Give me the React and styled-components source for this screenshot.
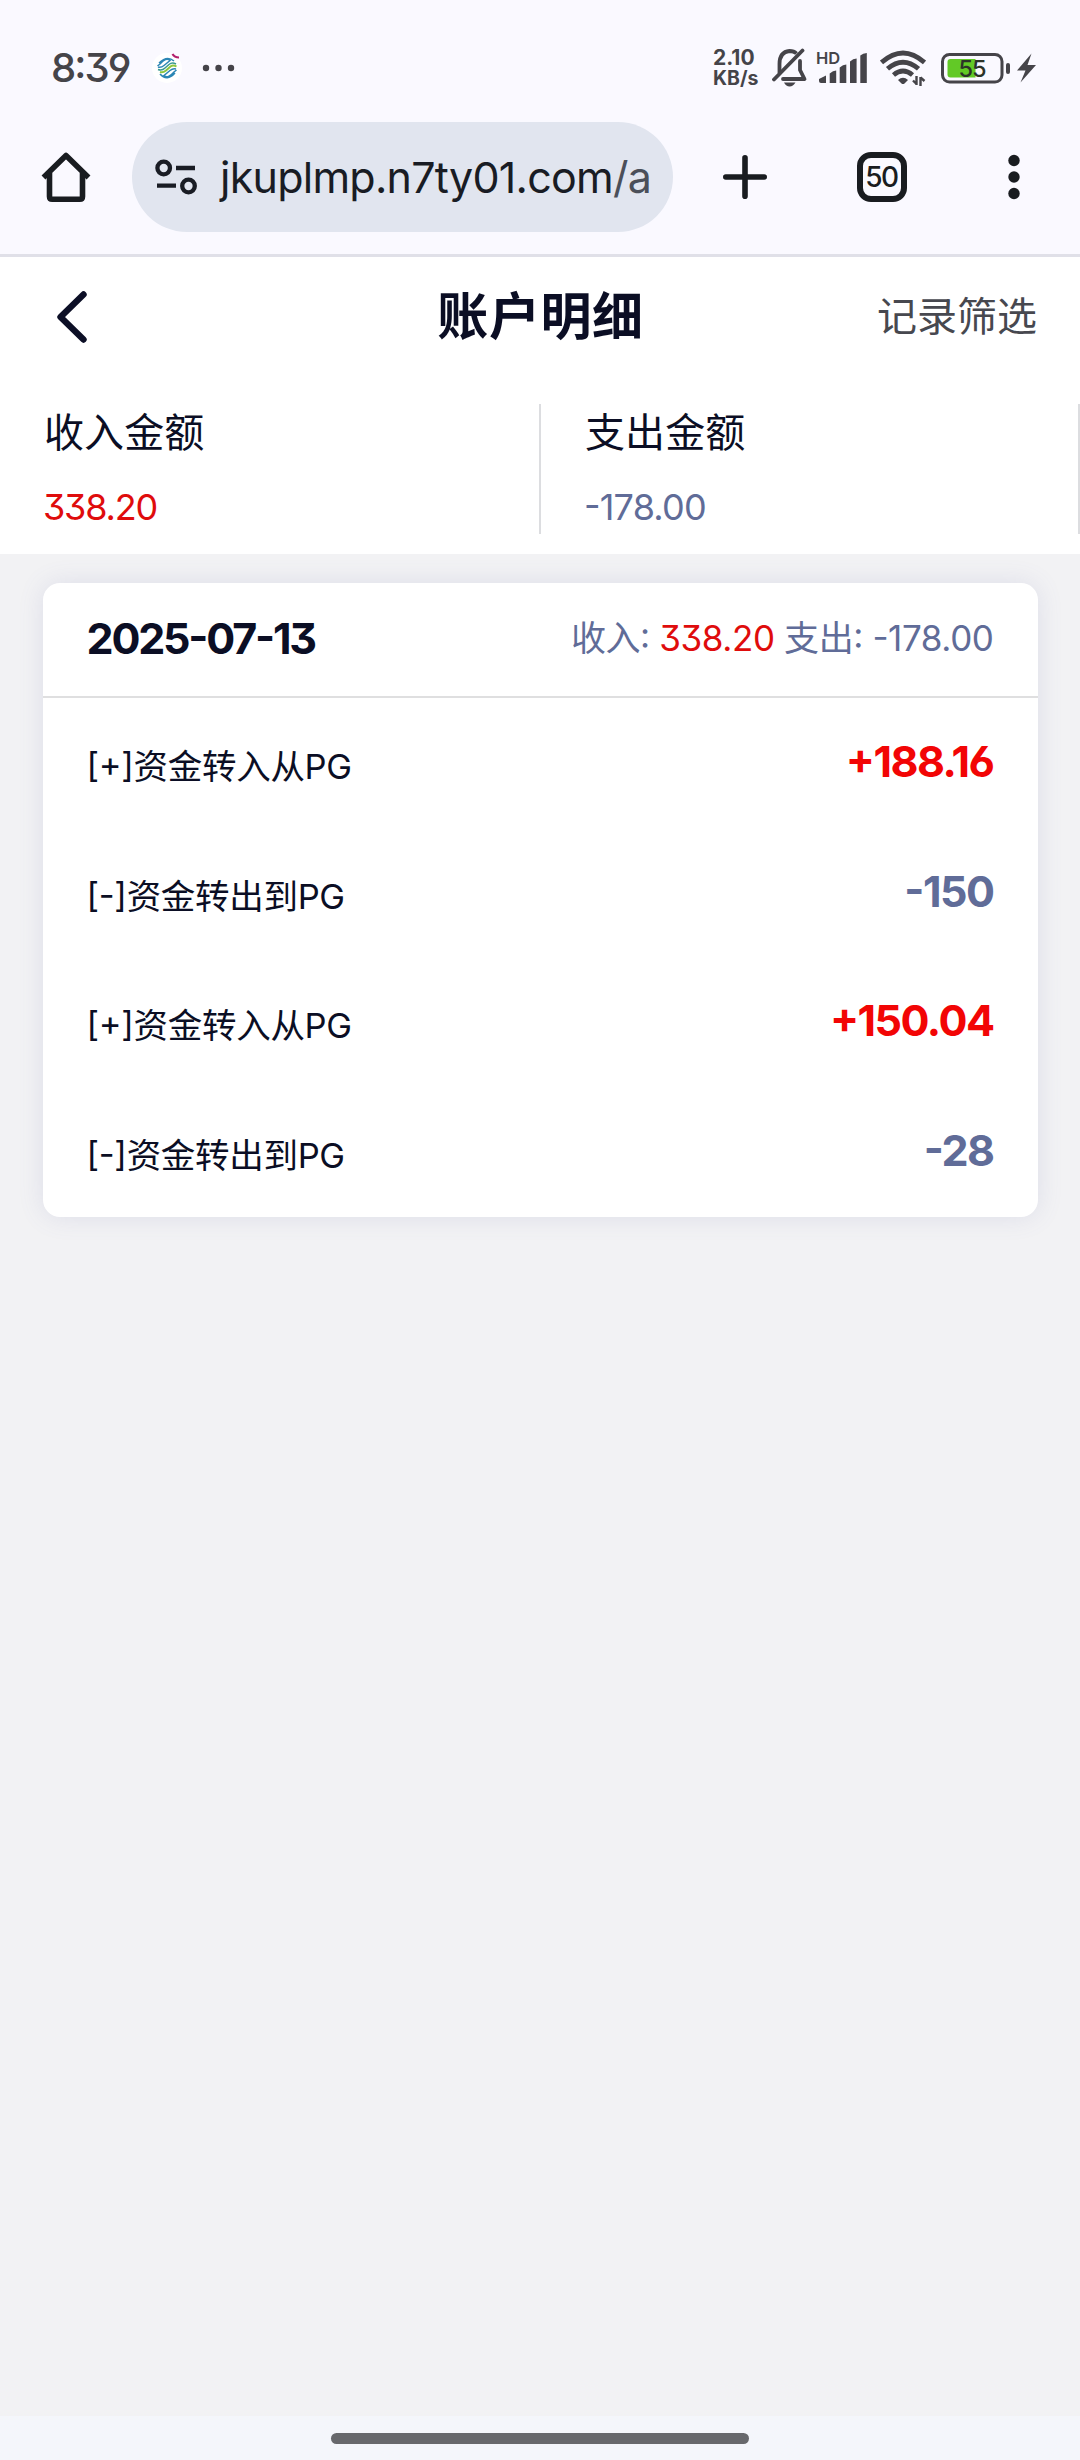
import React from "react";
import styled, { createGlobalStyle } from "styled-components";

const GlobalStyle = createGlobalStyle`
  *, *::before, *::after { box-sizing: border-box; }
  body {
    margin: 0;
    background: #f2f2f4;
    color: #0b0e24;
    font-family: Inter, "Noto Sans CJK SC", sans-serif;
    font-feature-settings: "cv03", "cv04", "cv09", "case";
    -webkit-font-smoothing: antialiased;
  }
  svg { display: block; flex: none; }
`;

const Screen = styled.div`
  display: flex;
  flex-direction: column;
  width: 1080px;
  height: 2460px;
  overflow: hidden;
`;

const BrowserTop = styled.header`
  height: 257px;
  background: #faf9ff;
  border-bottom: 3px solid #e0e0e8;
`;

const StatusBar = styled.div`
  display: flex;
  align-items: center;
  height: 122px;
  padding: 14px 43px 0 51px;
  color: #454449;
`;

const Clock = styled.span`
  width: 101px;
  font-size: 40px;
  line-height: 48px;
  font-weight: 500;
  letter-spacing: -1.9px;
`;

const StatusIcons = styled.div`
  display: flex;
  align-items: center;
  margin-left: auto;
`;

const NetSpeed = styled.div`
  display: flex;
  flex-direction: column;
  width: 59px;
  font-weight: 700;
`;

const SpeedValue = styled.span`
  font-size: 21px;
  line-height: 20px;
`;

const SpeedUnit = styled.span`
  font-size: 19.5px;
  line-height: 20px;
`;

const Signal = styled.div`
  position: relative;
  margin-left: 9px;
`;

const SignalTag = styled.span`
  position: absolute;
  left: -1px;
  top: -1px;
  font-size: 16.5px;
  line-height: 14px;
  font-weight: 600;
`;

const Battery = styled.div`
  position: relative;
  margin-left: 15px;
`;

const BatteryLevel = styled.span`
  position: absolute;
  left: 0;
  top: 0;
  width: 62px;
  text-align: center;
  font-size: 23.5px;
  line-height: 31px;
  font-weight: 500;
  letter-spacing: -1px;
  color: #2c3328;
`;

const Toolbar = styled.div`
  display: flex;
  align-items: center;
  height: 110px;
  padding: 0 60px 0 41px;
`;

const AddressBar = styled.div`
  display: flex;
  align-items: center;
  width: 541px;
  height: 110px;
  margin-left: 41px;
  padding-left: 23px;
  border-radius: 55px;
  background: #e1e5ef;
`;

const Url = styled.span`
  margin-left: 23px;
  font-size: 43px;
  line-height: 60px;
  letter-spacing: -0.75px;
  font-feature-settings: normal;
  white-space: nowrap;
  color: #191c24;
`;

const UrlPath = styled.span`
  color: #4b4f59;
`;

const Actions = styled.div`
  display: flex;
  flex: 1;
  align-items: center;
  justify-content: space-between;
  padding-left: 50px;
`;

const TabCount = styled.div`
  display: flex;
  align-items: center;
  justify-content: center;
  width: 50px;
  height: 50px;
  margin-right: 12px;
  border: 6px solid #191c20;
  border-radius: 14px;
  font-size: 28px;
  line-height: 38px;
  font-weight: 500;
  letter-spacing: -1.4px;
  color: #191c20;
`;

const PageHeader = styled.div`
  display: grid;
  grid-template-columns: 1fr auto 1fr;
  align-items: center;
  height: 118px;
  padding: 2px 43px 0 57px;
  background: #fff;
`;

const Title = styled.h1`
  margin: 0 0 0 -13px;
  font-size: 51px;
  line-height: 60px;
  font-weight: 700;
  letter-spacing: 0.6px;
`;

const Filter = styled.span`
  justify-self: end;
  font-size: 40px;
  line-height: 50px;
  color: #47484f;
`;

const Summary = styled.div`
  display: grid;
  grid-template-columns: 541px 1fr;
  height: 179px;
  padding: 29px 0 20px;
  background: #fff;
`;

const SummaryCell = styled.div`
  padding-left: 44px;
  border-right: 2px solid #dcdde0;
`;

const Label = styled.div`
  padding-top: 1px;
  font-size: 40px;
  line-height: 56px;
  letter-spacing: 0.1px;
`;

const Money = styled.span`
  color: ${(p) => (p.$income ? "#df0c0c" : "#606c98")};
`;

const Total = styled(Money)`
  display: block;
  margin: 23px 0 0 -1px;
  font-size: 36px;
  line-height: 46px;
  letter-spacing: ${(p) => (p.$income ? "-1.2px" : "-0.8px")};
`;

const Card = styled.section`
  width: 995px;
  margin: 29px auto 0;
  border-radius: 17px;
  background: #fff;
  box-shadow: 0 0 26px rgba(96, 108, 170, 0.14);
`;

const DayHead = styled.div`
  display: flex;
  align-items: center;
  justify-content: space-between;
  height: 115px;
  padding: 0 44px 3px;
  border-bottom: 2px solid #dfdfe0;
`;

const DayDate = styled.span`
  font-size: 43px;
  line-height: 56px;
  font-weight: 700;
  letter-spacing: -2.2px;
`;

const DayTotals = styled.span`
  font-size: 35px;
  line-height: 56px;
  letter-spacing: -0.4px;
  color: #606c98;
`;

const Entry = styled.div`
  display: flex;
  justify-content: space-between;
  height: 129.7px;
  padding: 0 44px;
`;

const EntryName = styled.span`
  padding-top: 44px;
  font-size: 34.5px;
  line-height: 50px;
  letter-spacing: -0.3px;
`;

const Amount = styled.span`
  padding-top: 38px;
  font-size: 43px;
  line-height: 50px;
  font-weight: 700;
  letter-spacing: -1.5px;
  color: ${(p) => (p.$income ? "#f20505" : "#606c98")};
`;

const NavBar = styled.footer`
  display: flex;
  justify-content: center;
  height: 44px;
  margin-top: auto;
  padding-top: 17px;
  background: #f4f6fb;
`;

const NavHandle = styled.div`
  width: 418px;
  height: 11px;
  border-radius: 6px;
  background: #67686c;
`;

const entries = [
  { name: "[+]资金转入从PG", amount: "+188.16", income: true },
  { name: "[-]资金转出到PG", amount: "-150", income: false },
  { name: "[+]资金转入从PG", amount: "+150.04", income: true },
  { name: "[-]资金转出到PG", amount: "-28", income: false },
];

const CarrierLogo = () => (
  <svg width="30" height="34" viewBox="0 0 30 34">
    <circle cx="15" cy="17" r="15" fill="#fff" />
    <g fill="none" strokeWidth="1.5">
      <path d="M7 12 Q15 4 22 10 M5.500 15 L8 13 Q14 6 18 9.500 L12 14.500 Q9 17 6 16" stroke="#2b86b5" />
      <path d="M8 23 Q15 31 23 22 M24.500 19 L22 21 Q16 28 12 24.500 L18 19.500 Q21 17 24 18" stroke="#2b86b5" />
      <path d="M6 18.500 Q10 20 13 17 L17 13.500 Q20 11 24 13" stroke="#3a9a8f" />
      <path d="M8 21 Q11 22 14 19.500 L18.500 15.500 Q21 13.500 24.500 15.500" stroke="#8cc63f" strokeWidth="2" />
    </g>
    <path d="M20.500 3 Q22.500 6.500 27 6.500" stroke="#b3206e" strokeWidth="2.200" fill="none" />
  </svg>
);

const DotsIcon = styled.svg`
  margin-left: 20px;
`;

const MoreDots = () => (
  <DotsIcon width="34" height="8" viewBox="0 0 34 8" fill="#454449">
    <circle cx="4" cy="4" r="3.200" />
    <circle cx="16.500" cy="4" r="3.200" />
    <circle cx="29" cy="4" r="3.200" />
  </DotsIcon>
);

const BellOff = () => (
  <svg width="36" height="40" viewBox="0 0 36 40" fill="none" stroke="#454449" strokeWidth="3.800">
    <path d="M7.500 25 V16 Q7.500 4 17.500 3 Q22 3 24.500 5.500" />
    <path d="M28 13 V22 L32.500 31 H11" strokeLinejoin="round" strokeLinecap="round" />
    <path d="M30.500 2.500 L2 31.500" strokeLinecap="round" />
    <path d="M12 34.500 H23.500 Q21 38.500 17.700 38.500 Q14 38.500 12 34.500 Z" fill="#454449" stroke="none" />
  </svg>
);

const SignalBars = () => (
  <svg width="50" height="32" viewBox="0 0 50 32" fill="#454449">
    <path d="M2 27 L9 23.500 V31 H4 Q2 31 2 29 Z" />
    <path d="M12.700 21.500 Q16 18.500 19.200 18.500 V31 H12.700 Z" />
    <path d="M22.700 15.500 Q26 12.500 29.300 12.500 V31 H22.700 Z" />
    <path d="M33 9.500 Q36 6.500 39.600 6.500 V31 H33 Z" />
    <path d="M43.300 3.500 Q46 1 49.800 1 V31 H43.300 Z" />
  </svg>
);

const WifiIcon = styled.svg`
  margin-left: 13px;
`;

const Wifi = () => (
  <WifiIcon width="46" height="36" viewBox="0 0 46 36" fill="none" stroke="#454449">
    <path d="M1.500 12.500 Q23 -6.500 44.500 12.500" strokeWidth="4.800" />
    <path d="M7.500 18.800 Q23 5.500 38.500 18.800" strokeWidth="4.800" />
    <path d="M13.500 25 Q23 17 32.500 25" strokeWidth="4.800" />
    <path d="M18 30 Q23 25.500 28 30 L24.500 33.500 Q23 34.500 21.500 33.500 Z" fill="#454449" stroke="none" />
    <path d="M36.500 26 V35 M36.500 34 L33 30.500 M40.500 36 V27 M40.500 27.500 L44.500 31" strokeWidth="2.400" />
  </WifiIcon>
);

const BatteryShape = () => (
  <svg width="70" height="31" viewBox="0 0 70 31">
    <rect x="1.500" y="1.500" width="59.500" height="27.500" rx="7" fill="none" stroke="#454449" strokeWidth="3" />
    <path d="M9.500 6 H34.500 V24.500 H9.500 Q6.500 24.500 6.500 21.500 V9 Q6.500 6 9.500 6 Z" fill="#62c926" />
    <rect x="65" y="10" width="4" height="11" rx="2" fill="#454449" />
  </svg>
);

const BoltIcon = styled.svg`
  margin-left: 6px;
`;

const Bolt = () => (
  <BoltIcon width="20" height="30" viewBox="0 0 20 30">
    <path d="M14.500 0.500 L0 17.500 H8.500 L3.500 29.500 L19 12 H10.500 Z" fill="#454449" />
  </BoltIcon>
);

const HomeIcon = () => (
  <svg width="50" height="50" viewBox="0 0 50 50" fill="none" stroke="#191c20" strokeWidth="5.600" strokeLinejoin="round">
    <path d="M2.500 25.500 L25 3.500 L47.500 25.500" />
    <path d="M8.500 21 V44.500 Q8.500 47.200 11.200 47.200 H38.800 Q41.500 47.200 41.500 44.500 V21" />
  </svg>
);

const SiteControls = () => (
  <svg width="42" height="36" viewBox="0 0 42 36" fill="none" stroke="#191c24" strokeWidth="4.300">
    <circle cx="8.700" cy="9" r="6.300" />
    <path d="M21 9 H40 M2 26.700 H21" />
    <circle cx="33.500" cy="27" r="6.300" />
  </svg>
);

const PlusIcon = () => (
  <svg width="44" height="44" viewBox="0 0 44 44" stroke="#191c20" strokeWidth="5.600" strokeLinecap="round">
    <path d="M22 2.800 V41.200 M2.800 22 H41.200" />
  </svg>
);

const MenuIcon = () => (
  <svg width="12" height="46" viewBox="0 0 12 46" fill="#191c20">
    <circle cx="6" cy="6.500" r="5.700" />
    <circle cx="6" cy="23" r="5.700" />
    <circle cx="6" cy="39.500" r="5.700" />
  </svg>
);

const BackIcon = () => (
  <svg width="30" height="52" viewBox="0 0 30 52" fill="none" stroke="#0c0f26" strokeWidth="6.400" strokeLinecap="round" strokeLinejoin="round">
    <path d="M26.500 3.500 L3.500 26 L26.500 48.500" />
  </svg>
);

export default function App() {
  return (
    <Screen>
      <GlobalStyle />
      <BrowserTop>
        <StatusBar>
          <Clock>8:39</Clock>
          <CarrierLogo />
          <MoreDots />
          <StatusIcons>
            <NetSpeed>
              <SpeedValue>2.10</SpeedValue>
              <SpeedUnit>KB/s</SpeedUnit>
            </NetSpeed>
            <BellOff />
            <Signal>
              <SignalTag>HD</SignalTag>
              <SignalBars />
            </Signal>
            <Wifi />
            <Battery>
              <BatteryShape />
              <BatteryLevel>55</BatteryLevel>
            </Battery>
            <Bolt />
          </StatusIcons>
        </StatusBar>
        <Toolbar>
          <HomeIcon />
          <AddressBar>
            <SiteControls />
            <Url>
              jkuplmp.n7ty01.com<UrlPath>/a</UrlPath>
            </Url>
          </AddressBar>
          <Actions>
            <PlusIcon />
            <TabCount>50</TabCount>
            <MenuIcon />
          </Actions>
        </Toolbar>
      </BrowserTop>

      <PageHeader>
        <BackIcon />
        <Title>账户明细</Title>
        <Filter>记录筛选</Filter>
      </PageHeader>

      <Summary>
        <SummaryCell>
          <Label>收入金额</Label>
          <Total $income>338.20</Total>
        </SummaryCell>
        <SummaryCell>
          <Label>支出金额</Label>
          <Total>-178.00</Total>
        </SummaryCell>
      </Summary>

      <Card>
        <DayHead>
          <DayDate>2025-07-13</DayDate>
          <DayTotals>
            收入: <Money $income>338.20</Money> 支出: <Money>-178.00</Money>
          </DayTotals>
        </DayHead>
        {entries.map((entry, i) => (
          <Entry key={i}>
            <EntryName>{entry.name}</EntryName>
            <Amount $income={entry.income}>{entry.amount}</Amount>
          </Entry>
        ))}
      </Card>

      <NavBar>
        <NavHandle />
      </NavBar>
    </Screen>
  );
}
